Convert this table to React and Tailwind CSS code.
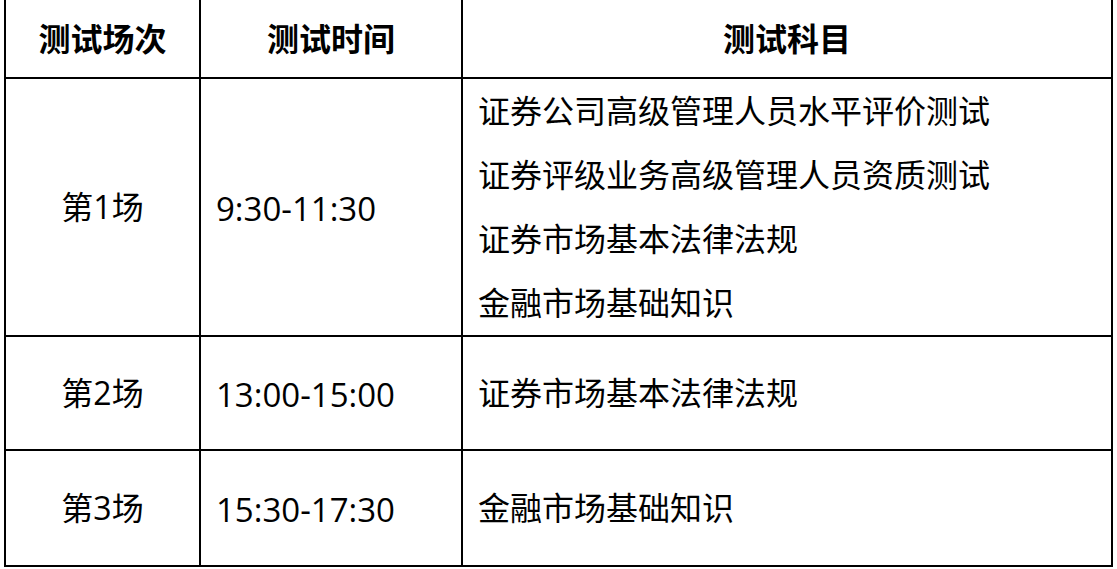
import React from 'react';

const rows = [
  {
    session: '第1场',
    time: '9:30-11:30',
    subjects: [
      '证券公司高级管理人员水平评价测试',
      '证券评级业务高级管理人员资质测试',
      '证券市场基本法律法规',
      '金融市场基础知识',
    ],
  },
  { session: '第2场', time: '13:00-15:00', subjects: ['证券市场基本法律法规'] },
  { session: '第3场', time: '15:30-17:30', subjects: ['金融市场基础知识'] },
];

const App = () => {
  return (
    <div className="w-[1117px] h-[569px] bg-white overflow-hidden text-black font-['Open_Sans','Noto_Sans_CJK_SC',sans-serif]">
      <div className="ml-[4px] mt-[-2px] w-[1109px] border-2 border-black grid grid-cols-[195px_262px_1fr] text-[32px] leading-[64px]">
        {/* header */}
        <div className="h-[79px] border-r-2 border-b-2 border-black flex items-center justify-center font-bold">测试场次</div>
        <div className="h-[79px] border-r-2 border-b-2 border-black flex items-center justify-center font-bold">测试时间</div>
        <div className="h-[79px] border-b-2 border-black flex items-center justify-center font-bold">测试科目</div>

        {rows.map((row, i) => {
          const last = i === rows.length - 1;
          return (
            <React.Fragment key={row.session}>
              <div className={`min-h-[114px] border-r-2 border-black flex items-center justify-center ${last ? '' : 'border-b-2'}`}>
                {row.session}
              </div>
              <div className={`min-h-[114px] border-r-2 border-black flex items-center pl-[15px] pt-[3px] text-[33px] ${last ? '' : 'border-b-2'}`}>
                {row.time}
              </div>
              <div className={`min-h-[114px] border-black flex flex-col justify-center pl-[15px] ${last ? '' : 'border-b-2'}`}>
                {row.subjects.map(s => (
                  <div key={s}>{s}</div>
                ))}
              </div>
            </React.Fragment>
          );
        })}
      </div>
    </div>
  );
};

export default App;
